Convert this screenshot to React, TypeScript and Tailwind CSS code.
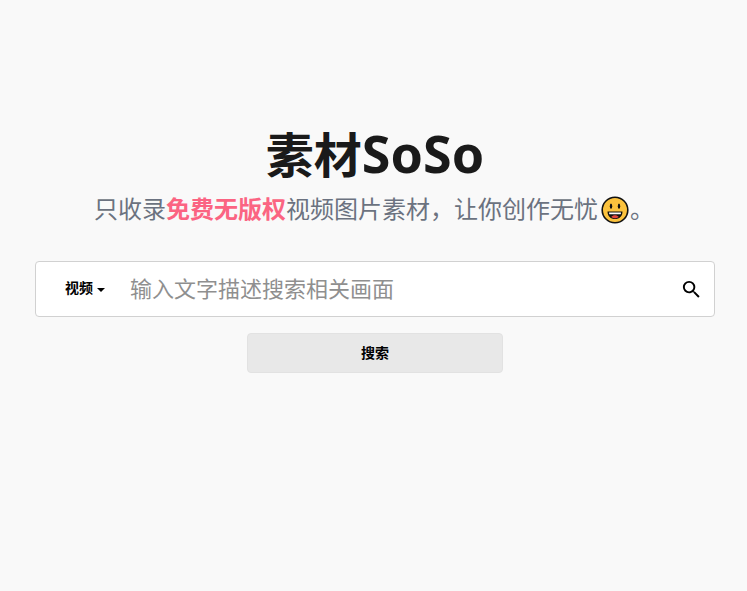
import React from "react";

const font = { fontFamily: '"Noto Sans", "Noto Sans CJK SC", sans-serif' };

function Smile() {
  return (
    <svg viewBox="0 0 28 28" className="inline-block w-[28px] h-[28px] ml-[3px] mr-[1px] align-[-6px]">
      <circle cx="14" cy="14" r="12.8" fill="#fbc23d" stroke="#111" strokeWidth="1.6" />
      <ellipse cx="10" cy="10.2" rx="1.2" ry="2.6" fill="#111" />
      <ellipse cx="18" cy="10.2" rx="1.2" ry="2.6" fill="#111" />
      <path d="M6.5 15.5h15c0 4.8-3.2 7.6-7.5 7.6s-7.5-2.8-7.5-7.6z" fill="#111" />
      <path d="M8 16.6h12l-.3 1.7H8.3z" fill="#fff" />
      <path d="M10.2 21c1-1.2 2.3-1.7 3.8-1.7s2.8.5 3.8 1.7c-1.1.9-2.4 1.3-3.8 1.3s-2.7-.4-3.8-1.3z" fill="#e2453c" />
    </svg>
  );
}

export default function App() {
  return (
    <div className="min-h-[591px] bg-[#f9f9f9] flex flex-col items-center pl-[35px] pr-[32px] pt-[120px]" style={font}>
      <h1 className="h-[66px] text-[48px] leading-[66px] font-bold text-[#1a1a1a]">
        素材<span className="text-[52px]">SoSo</span>
      </h1>
      <p className="mt-[6px] mr-[2px] h-[34px] text-[24px] leading-[34px] text-[#6b7280] whitespace-nowrap">
        只收录<span className="font-bold text-[#fb6482]">免费无版权</span>视频图片素材，让你创作无忧<Smile />。
      </p>
      <div className="mt-[35px] w-[680px] h-[56px] shrink-0 flex items-center bg-white border border-[#d1d1d1] rounded-[4px] pl-[29px] pr-[11px]">
        <div className="flex items-center gap-[4px] text-[14px] font-bold text-black">
          <span className="mb-[4px]">视频</span>
          <span className="w-0 h-0 border-x-[4px] border-x-transparent border-t-[4px] border-t-black mt-[1px]" />
        </div>
        <div className="ml-[25px] mb-[2px] flex-1 text-[22px] text-[#8f8f8f]">输入文字描述搜索相关画面</div>
        <svg viewBox="0 0 24 24" className="w-[23px] h-[23px] fill-black">
          <path d="M15.5 14h-.79l-.28-.27A6.47 6.47 0 0 0 16 9.5 6.5 6.5 0 1 0 9.5 16c1.61 0 3.09-.59 4.23-1.57l.27.28v.79l5 4.99L20.49 19l-4.99-5zm-6 0C7.01 14 5 11.99 5 9.5S7.01 5 9.5 5 14 7.01 14 9.5 11.99 14 9.5 14z" />
        </svg>
      </div>
      <button className="mt-[16px] w-[256px] h-[40px] shrink-0 pb-[2px] bg-[#e8e8e8] border border-[#e2e2e2] rounded-[4px] text-[14px] font-bold text-black">
        搜索
      </button>
    </div>
  );
}
